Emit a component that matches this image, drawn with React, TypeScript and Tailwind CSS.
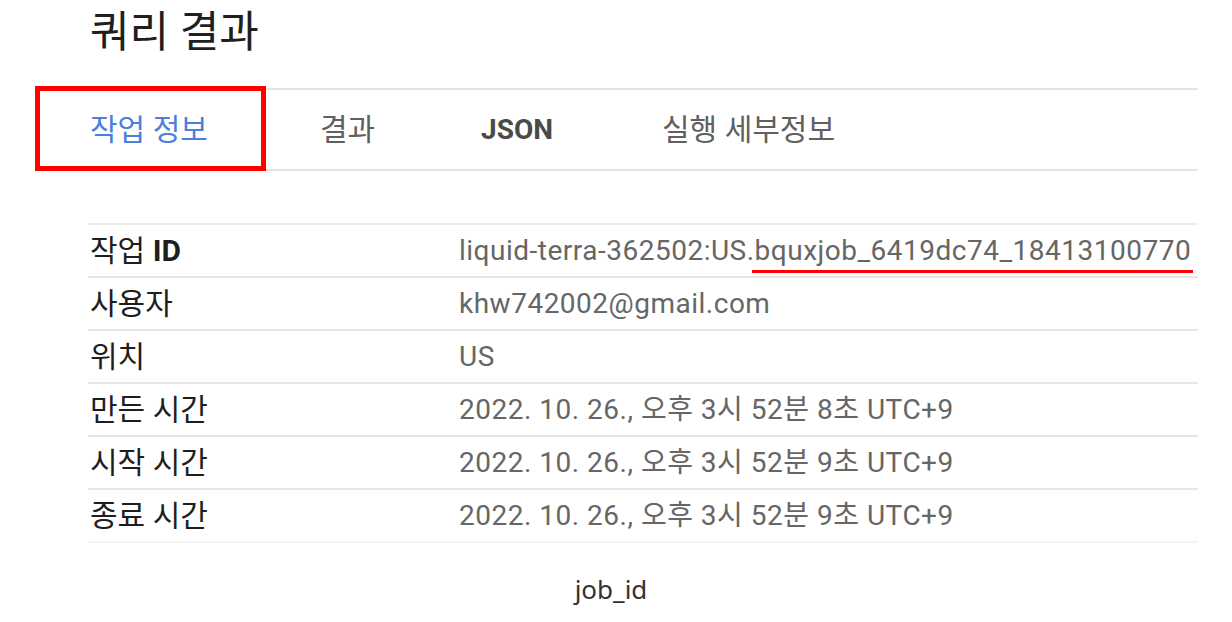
const KR = "font-['Roboto','Noto_Sans_CJK_KR',sans-serif]";

const rows = [
  { label: <>작업 <b className="font-bold">ID</b></>, value: "job" },
  { label: "사용자", value: "khw742002@gmail.com" },
  { label: "위치", value: "US" },
  { label: "만든 시간", value: "2022. 10. 26., 오후 3시 52분 8초 UTC+9" },
  { label: "시작 시간", value: "2022. 10. 26., 오후 3시 52분 9초 UTC+9" },
  { label: "종료 시간", value: "2022. 10. 26., 오후 3시 52분 9초 UTC+9" },
];

const tabs = [
  { name: "작업 정보", w: "w-[230px]", cls: "text-[30px] text-[#4a80dc]" },
  { name: "결과", w: "w-[161px]", cls: "text-[30px] text-[#606060]" },
  { name: "JSON", w: "w-[181px]", cls: "text-[28px] text-[#4a4a4a] font-bold" },
  { name: "실행 세부정보", w: "w-[260px]", cls: "text-[30px] text-[#606060]" },
];

export default function App() {
  return (
    <div className={`relative w-[1232px] h-[622px] bg-white overflow-hidden ${KR}`}>
      {/* Title */}
      <h1 className="pl-[90px] pt-[6px] h-[88px] text-[43px] leading-[52px] text-[#1f1f1f]">쿼리 결과</h1>

      {/* Tabs */}
      <div className="ml-[88px] w-[1110px] h-[83px] border-y-2 border-[#e3e3e3] flex items-center">
        {tabs.map(t => (
          <div key={t.name} className={`${t.w} pl-[2px] ${t.cls}`}>{t.name}</div>
        ))}
      </div>
      <div className="absolute left-[35px] top-[86px] w-[231px] h-[85px] border-[5px] border-[#ff0000]" />

      {/* Job info table */}
      <div className="ml-[88px] mt-[52px] w-[1110px]">
        {rows.map((r, i) => (
          <div key={i} className={`flex items-center h-[53px] border-t-2 ${i === 0 ? "border-[#ececec]" : "border-[#e6e6e6]"}`}>
            <div className="w-[371px] pl-[2px] text-[30px] text-[#1e1e1e]">{r.label}</div>
            <div className="text-[28px] text-[#666] tracking-[0.5px] whitespace-nowrap">
              {r.value === "job" ? (
                <span>
                  liquid-terra-362502:US.
                  <span className="relative">
                    bquxjob_6419dc74_18413100770
                    <span className="absolute left-[-3px] right-[-2px] bottom-[-6px] h-[3px] bg-[#ff0000]" />
                  </span>
                </span>
              ) : r.value}
            </div>
          </div>
        ))}
        <div className="border-t-2 border-[#f3f3f3]" />
      </div>

      {/* Caption */}
      <p className="absolute left-0 right-[10px] top-[570px] text-center text-[26px] text-[#333] font-['Noto_Sans',sans-serif]">job_id</p>
    </div>
  );
}
